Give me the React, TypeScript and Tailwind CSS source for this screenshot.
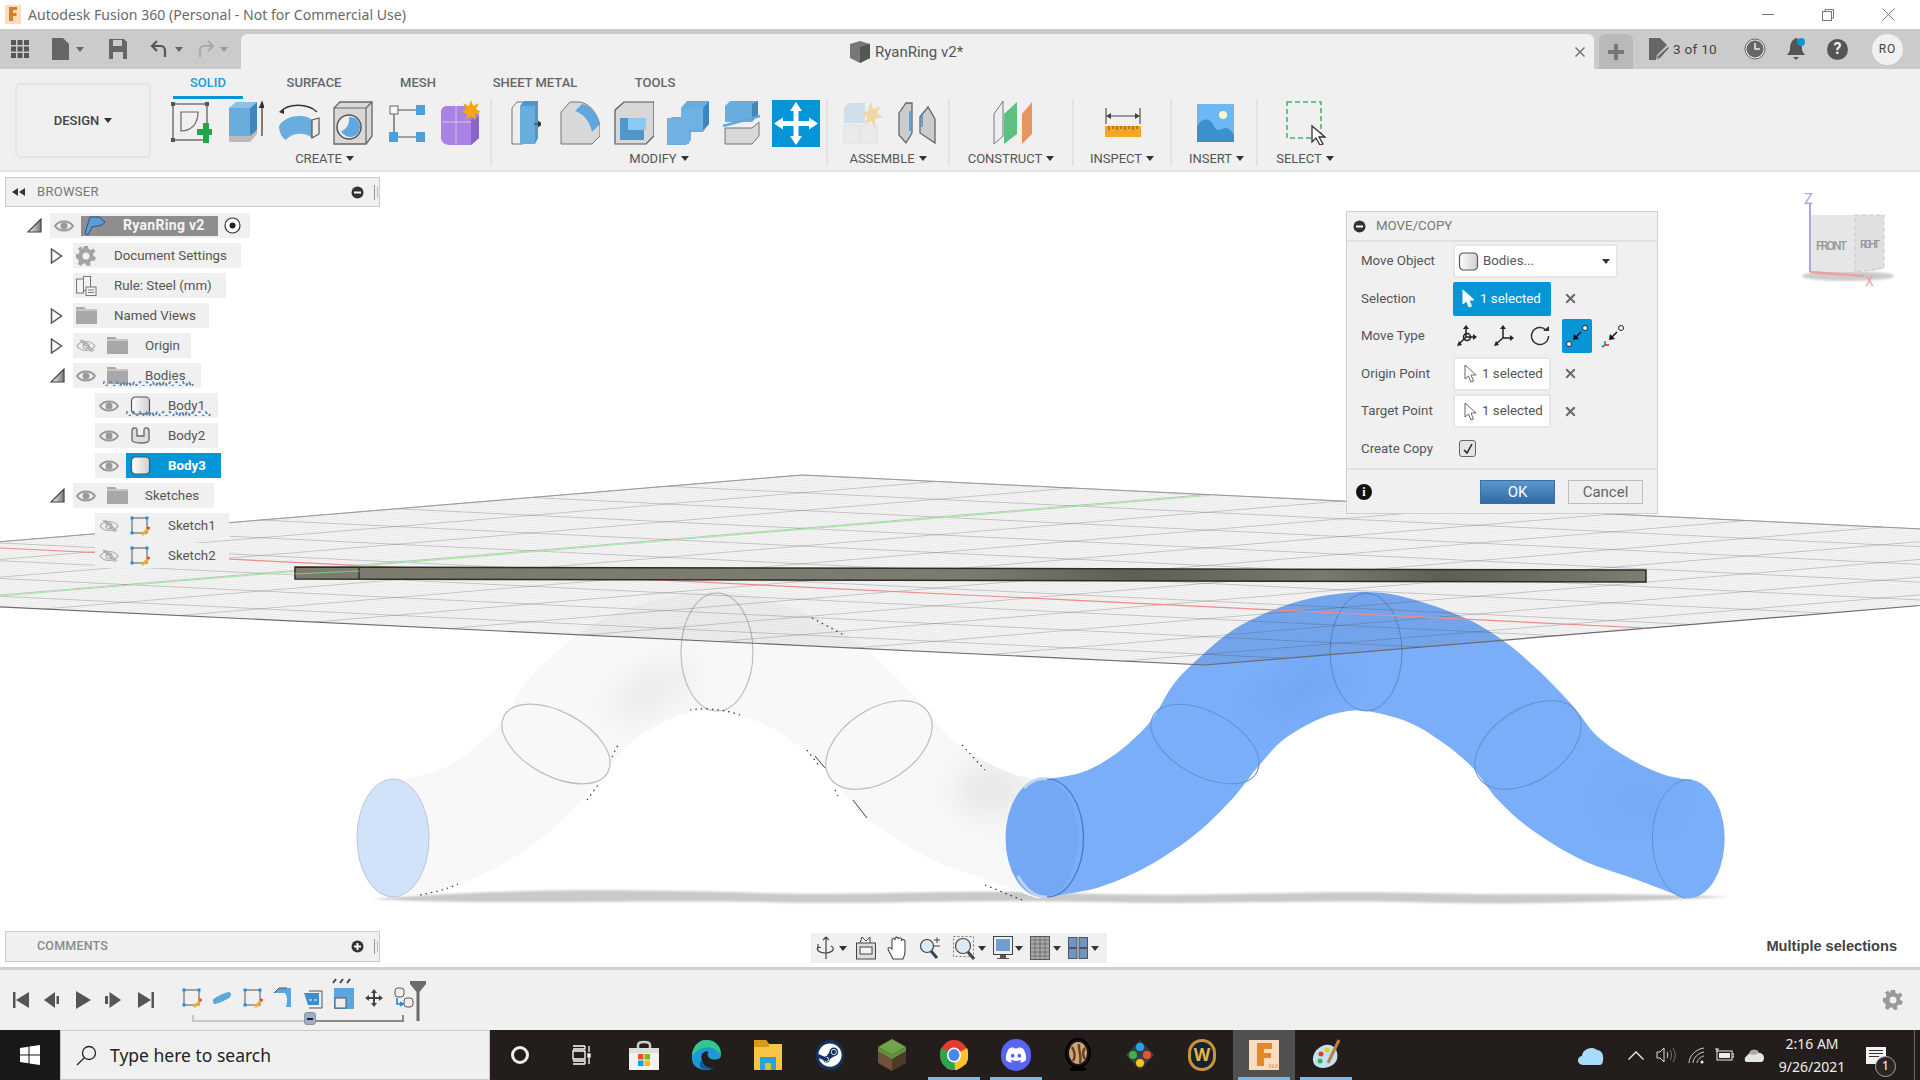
import { ReactNode } from 'react';
import { FaDiscord, FaSteam } from 'react-icons/fa';
import { X } from 'lucide-react';

type Pt = [number, number];

const upper: Pt[] = [[1047, 779], [1083, 772], [1117, 753], [1150, 722], [1173, 685], [1200, 657], [1233, 630], [1273, 610], [1317, 597], [1367, 592], [1408, 598], [1465, 618], [1505, 642], [1538, 670], [1572, 705], [1598, 737], [1632, 760], [1665, 775], [1692, 780]];
const lower: Pt[] = [[1685, 898], [1632, 878], [1582, 860], [1532, 830], [1498, 800], [1472, 767], [1442, 742], [1408, 722], [1367, 711], [1343, 712], [1317, 720], [1283, 740], [1257, 768], [1233, 798], [1197, 833], [1150, 865], [1100, 887], [1047, 897]];

// catmull-rom through the outline points
const curve = (p: Pt[]) => {
  let d = '';
  for (let i = 0; i < p.length - 1; i++) {
    const a = p[Math.max(i - 1, 0)];
    const b = p[i];
    const c = p[i + 1];
    const e = p[Math.min(i + 2, p.length - 1)];
    d += ` C${b[0] + (c[0] - a[0]) / 6} ${b[1] + (c[1] - a[1]) / 6} ${c[0] - (e[0] - b[0]) / 6} ${c[1] - (e[1] - b[1]) / 6} ${c[0]} ${c[1]}`;
  }
  return d;
};
const tubePath = `M1047 779${curve(upper)} A36 59 0 0 1 1685 898${curve(lower)} A36 59 0 0 1 1047 779 Z`;

const lerp = (a: Pt, b: Pt, t: number): Pt => [a[0] + (b[0] - a[0]) * t, a[1] + (b[1] - a[1]) * t];
const A: Pt = [802, 475];
const L: Pt = [-496, 583];
const R: Pt = [2503, 557];
const B: Pt = [1205, 665];

const Caret = ({ className = '' }: { className?: string }) => (
  <svg width="8" height="5" viewBox="0 0 8 5" className={className}>
    <path d="M0 0H8L4 5Z" fill="currentColor" />
  </svg>
);

const Arrow = ({ fill = '#fff', stroke = '#666' }: { fill?: string; stroke?: string }) => (
  <svg width="14" height="19" viewBox="0 0 14 19">
    <path d="M2 1V15L5.500 12L8 18L10.500 17L8 11H13Z" fill={fill} stroke={stroke} strokeWidth="1" strokeLinejoin="round" />
  </svg>
);

const Eye = ({ off = false }: { off?: boolean }) => (
  <svg width="20" height="14" viewBox="0 0 20 14">
    {off ? (
      <g fill="none" stroke="#aaa" strokeWidth="1.200">
        <path d="M1 7C5 1 15 1 19 7C15 13 5 13 1 7Z" />
        <circle cx="10" cy="7" r="3" />
        <path d="M4 1L16 13M6 1L18 12" />
      </g>
    ) : (
      <g>
        <path d="M1 7C5 1 15 1 19 7C15 13 5 13 1 7Z" fill="none" stroke="#999" strokeWidth="2" />
        <circle cx="10" cy="7" r="3.500" fill="#999" />
      </g>
    )}
  </svg>
);

const Folder = () => (
  <svg width="21" height="17" viewBox="0 0 21 17">
    <path d="M0 0H8L10 2H21V17H0Z" fill="#a8a8a8" />
    <path d="M0 3H21" stroke="#e4e4e4" strokeWidth="1" />
  </svg>
);

const Tri = ({ open }: { open: boolean }) =>
  open ? (
    <svg width="15" height="15" viewBox="0 0 15 15">
      <defs>
        <linearGradient id="tri" x1="0" y1="0" x2="1" y2="0">
          <stop offset="0" stopColor="#fff" />
          <stop offset="1" stopColor="#777" />
        </linearGradient>
      </defs>
      <path d="M1 14L14 1V14Z" fill="url(#tri)" stroke="#444" strokeWidth="1.200" />
    </svg>
  ) : (
    <svg width="13" height="16" viewBox="0 0 13 16">
      <path d="M1.500 1L11.500 8L1.500 15Z" fill="#fafafa" stroke="#555" strokeWidth="1.500" />
    </svg>
  );

const BodyIcon = ({ cut = false }: { cut?: boolean }) =>
  cut ? (
    <svg width="21" height="19" viewBox="0 0 21 19">
      <path d="M2 5C2 1 7 1 7 4V10H14V4C14 1 19 1 19 5V14C19 18 2 18 2 14Z" fill="#ddd" stroke="#666" strokeWidth="1.300" />
    </svg>
  ) : (
    <svg width="21" height="19" viewBox="0 0 21 19">
      <defs>
        <linearGradient id="cyl" x1="0" y1="0" x2="1" y2="0">
          <stop offset="0" stopColor="#fff" />
          <stop offset="1" stopColor="#cfcfcf" />
        </linearGradient>
      </defs>
      <rect x="1.500" y="1" width="18" height="17" rx="4" fill="url(#cyl)" stroke="#555" strokeWidth="1.200" />
    </svg>
  );

const SketchIcon = ({ size = 20 }: { size?: number }) => (
  <svg width={size} height={size} viewBox="0 0 20 20">
    <rect x="2" y="2" width="15" height="15" fill="none" stroke="#555" strokeWidth="1" />
    {[[2, 2], [17, 2], [2, 17]].map(([x, y]) => (
      <rect key={`${x}${y}`} x={x - 1.500} y={y - 1.500} width="3" height="3" fill="#1d8fe0" />
    ))}
    <path d="M11 18L17 12L19 14L13 20Z" fill="#f0b030" />
    <circle cx="18.500" cy="12" r="1.500" fill="#e8402a" />
  </svg>
);

const CircleSign = ({ plus = false }: { plus?: boolean }) => (
  <svg width="13" height="13" viewBox="0 0 13 13">
    <circle cx="6.500" cy="6.500" r="6" fill="#333" />
    <path d={plus ? 'M3 6.500H10M6.500 3V10' : 'M3 6.500H10'} stroke="#fff" strokeWidth="2" />
  </svg>
);

const Handle = () => (
  <svg width="4" height="15" viewBox="0 0 4 15">
    <path d="M.5 0V15" stroke="#999" />
    <path d="M3.500 2V13" stroke="#bbb" />
  </svg>
);

const toolIcons: Record<string, ReactNode> = {
  sketch: (
    <svg width="42" height="44" viewBox="0 0 42 44">
      <rect x="3" y="3" width="34" height="36" fill="none" stroke="#555" strokeWidth="1.200" />
      {[[3, 3], [37, 3], [3, 39]].map(([x, y]) => (
        <rect key={`${x}${y}`} x={x - 2} y={y - 2} width="4" height="4" fill="#555" />
      ))}
      <path d="M11 11H28C28 22 22 30 11 30Z" fill="none" stroke="#666" strokeWidth="1.200" />
      <path d="M27 28H33V22H39V28H42V34H39V42H33V34H27Z" fill="#1fa64a" />
    </svg>
  ),
  extrude: (
    <svg width="38" height="46" viewBox="0 0 38 46">
      <path d="M3 8L10 2H31V34L24 42H3Z" fill="#bbb" />
      <path d="M3 8H24V36H3Z" fill="#69addf" />
      <path d="M24 8L31 2V30L24 36Z" fill="#3f86bd" />
      <path d="M3 8L10 2H31L24 8Z" fill="#8cc2ea" />
      <path d="M36 36V4M33.500 8L36 2L38 8" stroke="#333" fill="#333" strokeWidth="1.200" />
    </svg>
  ),
  revolve: (
    <svg width="42" height="46" viewBox="0 0 42 46">
      <path d="M2 12C10 3 30 3 39 12" fill="none" stroke="#333" strokeWidth="1.300" />
      <path d="M1 12L6 9L6 14Z" fill="#333" />
      <path d="M1 26C8 14 28 14 34 20V38C28 32 14 32 8 40C4 38 1 32 1 26Z" fill="#69addf" />
      <path d="M34 20L41 18V34L34 38Z" fill="#eee" stroke="#555" strokeWidth="1.200" />
    </svg>
  ),
  hole: (
    <svg width="42" height="46" viewBox="0 0 42 46">
      <path d="M2 8L8 2H40V36L34 44H2Z" fill="#d8d8d8" stroke="#666" strokeWidth="1.300" />
      <path d="M34 44V8H2M34 8L40 2" fill="none" stroke="#666" strokeWidth="1.200" />
      <circle cx="17" cy="27" r="12" fill="#eee" stroke="#555" strokeWidth="1.500" />
      <path d="M17 17A10 10 0 1 1 9 31C14 30 18 24 17 17Z" fill="#5fa8df" />
    </svg>
  ),
  pattern: (
    <svg width="37" height="42" viewBox="0 0 37 42">
      <rect x="1" y="4" width="8" height="8" fill="#f8f8f8" stroke="#666" />
      <rect x="27" y="3" width="9" height="10" fill="#4d9fdc" />
      <rect x="0" y="30" width="9" height="10" fill="#4d9fdc" />
      <rect x="27" y="30" width="9" height="10" fill="#4d9fdc" />
      <path d="M9 8H27M5 12V30M9 35H27" stroke="#555" strokeWidth="1.200" />
    </svg>
  ),
  form: (
    <svg width="40" height="46" viewBox="0 0 40 46">
      <path d="M6 6H24L38 14V38L30 45H8C3 45 0 41 0 38V12C0 8 3 6 6 6Z" fill="#a983e4" />
      <path d="M30 20L38 16V38L30 45Z" fill="#8a63c8" />
      <path d="M1 22H30M15 6V45" stroke="#c9b0ef" strokeWidth="1.300" />
      <path d="M30 0L32 6L38 3L35 9L40 12L34 14L35 20L30 16L25 20L26 14L20 12L25 9L22 3L28 6Z" fill="#f5a50f" />
    </svg>
  ),
  press: (
    <svg width="30" height="46" viewBox="0 0 30 46">
      <path d="M1 8L6 2H12V44H1Z" fill="#eee" stroke="#777" />
      <path d="M9 6H24V44H9Z" fill="#69addf" />
      <path d="M9 6L13 1H27V38L24 44V6Z" fill="#4f96cc" />
      <path d="M23 24H30M27 21L31 24L27 27" stroke="#333" fill="#333" />
    </svg>
  ),
  fillet: (
    <svg width="40" height="46" viewBox="0 0 40 46">
      <path d="M1 12L10 2H20C30 4 38 14 40 26V36L32 44H1Z" fill="#d8d8d8" stroke="#777" />
      <path d="M22 4C31 6 37 14 40 24L32 32C30 22 24 14 15 11Z" fill="#5fa8df" />
    </svg>
  ),
  chamfer: (
    <svg width="40" height="46" viewBox="0 0 40 46">
      <path d="M1 10L10 2H40V36L32 44H1Z" fill="#d8d8d8" stroke="#555" strokeWidth="1.200" />
      <path d="M6 40V18H14V30H30V40Z" fill="#4f96cc" />
      <path d="M14 18H32V30H14Z" fill="#8cc8f2" />
    </svg>
  ),
  combine: (
    <svg width="42" height="46" viewBox="0 0 42 46">
      <path d="M14 8L20 1H42V24L36 32H24V40L19 45H0V22L5 17H14Z" fill="#69addf" />
      <path d="M14 8H36V30H22V44H0V18H14Z" fill="#6fb1e3" />
      <path d="M36 8L42 1V24L36 30Z" fill="#3f86bd" />
    </svg>
  ),
  split: (
    <svg width="40" height="46" viewBox="0 0 40 46">
      <path d="M3 6L8 1H36V16L30 22H3Z" fill="#69addf" />
      <path d="M30 4L36 1V16L30 20Z" fill="#3f86bd" />
      <path d="M1 26L38 16" stroke="#5fa8df" strokeWidth="2.500" />
      <path d="M3 28H30L37 22V36L30 44H3Z" fill="#d8d8d8" stroke="#777" />
    </svg>
  ),
  move: (
    <svg width="48" height="47" viewBox="0 0 48 47" className="bg-[#0696d7]">
      <path d="M24 2L30 11H26.500V21H37V17.500L46 23.500L37 29.500V26H26.500V36H30L24 45L18 36H21.500V26H11V29.500L2 23.500L11 17.500V21H21.500V11H18Z" fill="#fff" />
    </svg>
  ),
  newComp: (
    <svg width="40" height="44" viewBox="0 0 40 44" opacity=".45">
      <path d="M1 6L6 2H22V22H1Z" fill="#a8cde8" />
      <path d="M1 24H17V42H1ZM18 24H34V42H18Z" fill="#e4e4e4" stroke="#ccc" />
      <path d="M28 0L30 8L38 5L34 12L40 16L32 18L32 26L28 20L22 24L24 16L18 12L25 10Z" fill="#f2b94f" />
    </svg>
  ),
  joint: (
    <svg width="38" height="44" viewBox="0 0 38 44">
      <path d="M1 12L8 2H14V32L8 42L1 34Z" fill="#ccc" stroke="#666" strokeWidth="1.300" />
      <path d="M22 16L30 6L37 18V42L22 32Z" fill="#ccc" stroke="#666" strokeWidth="1.300" />
      <path d="M12 10V30M24 12V26" stroke="#3b98df" strokeWidth="1.500" />
    </svg>
  ),
  plane: (
    <svg width="40" height="46" viewBox="0 0 40 46">
      <path d="M1 14L10 1V36L1 44Z" fill="#eee" stroke="#777" />
      <path d="M11 14L24 2V34L11 44Z" fill="#5cc080" />
      <path d="M29 14L39 2V34L29 44Z" fill="#e49560" />
    </svg>
  ),
  measure: (
    <svg width="36" height="30" viewBox="0 0 36 30">
      <path d="M1 0V16M35 0V16M2 8H34" stroke="#444" strokeWidth="1.100" fill="none" />
      <path d="M1 8L6 5V11ZM35 8L30 5V11Z" fill="#444" />
      <rect x="0" y="18" width="36" height="11" fill="#f5a623" />
      <path d="M4 18V22M8 18V21M12 18V22M16 18V21M20 18V22M24 18V21M28 18V22M32 18V21" stroke="#77510f" />
    </svg>
  ),
  image: (
    <svg width="37" height="38" viewBox="0 0 37 38">
      <rect width="37" height="38" fill="#6cb8f5" />
      <circle cx="26" cy="11" r="4" fill="#fbf7c2" />
      <path d="M0 38V22C6 12 14 14 18 24C20 28 26 24 29 24C33 25 35 28 37 31V38Z" fill="#3b90cd" />
    </svg>
  ),
  select: (
    <svg width="40" height="44" viewBox="0 0 40 44">
      <rect x="1" y="1" width="34" height="36" fill="none" stroke="#3bb464" strokeWidth="1.500" strokeDasharray="5 3" />
      <path d="M26 25V41L30 37L34 44L37 43L33 36H39Z" fill="#fff" stroke="#333" strokeWidth="1.300" />
    </svg>
  ),
};

const Tool = ({ name }: { name: string }) => (
  <div className="w-[54px] h-[48px] flex items-center justify-center shrink-0">{toolIcons[name]}</div>
);

const Group = ({ label, width, tools, pad, labelClass = '', sep = true }: { label: string; width: string; tools: string[]; pad: string; labelClass?: string; sep?: boolean }) => (
  <div className={`flex flex-col ${width} ${sep ? 'border-r-2 border-[#e2e2e2]' : ''} h-[67px] shrink-0`}>
    <div className={`flex h-[48px] ${pad}`}>
      {tools.map(t => (
        <Tool key={t} name={t} />
      ))}
    </div>
    <div className={`flex items-center justify-center gap-[4px] h-[19px] pt-[4px] text-[13px] text-[#555] ${labelClass}`}>
      {label}
      <Caret className="text-[#333]" />
    </div>
  </div>
);

type RowProps = {
  level: 0 | 1 | 2;
  open?: boolean;
  eye?: 'on' | 'off';
  icon: ReactNode;
  text: string;
  pr: string;
  selected?: boolean;
  wavy?: boolean;
};

const Squiggle = ({ w, className }: { w: number; className: string }) => (
  <svg width={w} height="6" viewBox={`0 0 ${w} 6`} className={`absolute bottom-[2px] ${className}`}>
    <path
      d={`M0 4${Array.from({ length: Math.floor(w / 6) }, () => 'q1.500 -4 3 0 t3 0').join('')}`}
      fill="none"
      stroke="#5b7fae"
      strokeWidth="2"
      strokeDasharray="3 2.500"
    />
  </svg>
);

const Row = ({ level, open, eye, icon, text, pr, selected, wavy }: RowProps) => (
  <div className={`flex items-center h-[25px] ${level === 2 ? 'ml-[95px]' : 'ml-[50px]'}`}>
    {level === 1 && <div className="w-[23px] flex items-center">{open !== undefined && <Tri open={open} />}</div>}
    <div className={`relative flex items-center h-full bg-[#f0f0f0] ${level === 2 ? 'pl-[4px]' : 'pl-[3px]'} ${selected ? '' : pr}`}>
      {eye && (
        <div className="w-[20px] mr-[11px]">
          <Eye off={eye === 'off'} />
        </div>
      )}
      {wavy && <Squiggle w={level === 2 ? 87 : 95} className={level === 2 ? 'left-[31px]' : 'left-[30px]'} />}
      {selected ? (
        <div className={`flex items-center h-full -ml-[4px] pl-[4px] bg-[#0696d7] text-white font-bold ${pr}`}>
          <div className="w-[21px]">{icon}</div>
          <span className="ml-[17px] pt-px">{text}</span>
        </div>
      ) : (
        <>
          <div className="w-[21px]">{icon}</div>
          <span className="ml-[17px] pt-px text-[#555]">{text}</span>
        </>
      )}
    </div>
  </div>
);

const FormRow = ({ label, children }: { label: string; children: ReactNode }) => (
  <div className="flex items-center h-[34px]">
    <div className="w-[92px] text-[#555] shrink-0">{label}</div>
    {children}
  </div>
);

const Clear = () => <X size={15} strokeWidth={3} className="ml-[12px] text-[#666]" />;

const moveIcons = [
  <svg key="a" width="20" height="22" viewBox="0 0 20 22" fill="none" stroke="#222" strokeWidth="1.500">
    <path d="M9 2V12L2 19M9 12H18" /><path d="M9 0L6 4H12ZM20 12L16 9V15ZM0 21L5 20L2 16Z" fill="#222" stroke="none" /><circle cx="10" cy="12" r="3.500" />
  </svg>,
  <svg key="b" width="20" height="22" viewBox="0 0 20 22" fill="none" stroke="#222" strokeWidth="1.500">
    <path d="M9 2V13L2 19M9 13H18" /><path d="M9 0L6 4H12ZM20 13L16 10V16ZM0 21L5 20L2 16Z" fill="#222" stroke="none" />
  </svg>,
  <svg key="c" width="20" height="20" viewBox="0 0 20 20" fill="none" stroke="#333" strokeWidth="1.500">
    <path d="M16 4A8.500 8.500 0 1 0 18.500 10" /><path d="M13 5H19V0Z" fill="#333" stroke="none" />
  </svg>,
];

const PointToPoint = ({ color = '#111', axis = false }: { color?: string; axis?: boolean }) => (
  <svg width="24" height="24" viewBox="0 0 24 24" fill="none">
    <circle cx="20" cy="4" r="2.500" fill="#fff" stroke="#222" />
    {!axis && <circle cx="4" cy="20" r="2.500" fill="#fff" stroke="#222" />}
    <path d="M16 8L10 14" stroke={color} strokeWidth="1.500" />
    <path d="M8 16L9 10L14 15Z" fill={color} />
    {axis && (
      <g strokeWidth="1.800">
        <path d="M4 17V21" stroke="#33a853" />
        <path d="M4 21H8" stroke="#e33" />
        <path d="M4 21L1 23" stroke="#27c" />
      </g>
    )}
  </svg>
);

const Transport = ({ d, className = '' }: { d: string; className?: string }) => (
  <svg width="16" height="18" viewBox="0 0 16 18" className={className}>
    <path d={d} fill="#555" />
  </svg>
);

const timelineIcons: ReactNode[] = [
  <SketchIcon key="1" />,
  <svg key="2" width="20" height="14" viewBox="0 0 20 14"><path d="M1 9C1 7 14 1 17 1C19 1 20 5 17 7C14 9 5 13 3 13C1 13 1 11 1 9Z" fill="#5aa7e0" /></svg>,
  <SketchIcon key="3" />,
  <svg key="4" width="20" height="22" viewBox="0 0 20 22"><path d="M1 6L6 1H18V20H13C15 14 14 8 12 6Z" fill="#5aa7e0" /><path d="M1 6L6 1H14" fill="none" stroke="#555" /></svg>,
  <svg key="5" width="20" height="22" viewBox="0 0 20 22"><path d="M6 4H19V21H6" fill="#eee" stroke="#555" /><path d="M1 6H16V18H5Z" fill="#3c8fcf" /><path d="M6 13H9M11 13H14" stroke="#fff" /></svg>,
  <svg key="6" width="20" height="22" viewBox="0 0 20 22"><rect width="20" height="21" y="1" fill="#5aa7e0" /><rect x="1" y="11" width="11" height="10" fill="#eee" stroke="#555" /></svg>,
  <svg key="7" width="18" height="18" viewBox="0 0 18 18"><path d="M9 0L12 4H10V8H14V6L18 9L14 12V10H10V14H12L9 18L6 14H8V10H4V12L0 9L4 6V8H8V4H6Z" fill="#444" /></svg>,
  <svg key="8" width="20" height="22" viewBox="0 0 20 22"><rect x="1" y="1" width="9" height="9" rx="3" fill="#eee" stroke="#555" /><rect x="10" y="11" width="9" height="9" rx="3" fill="#eee" stroke="#555" /><path d="M3 11V17H8M6 15L9 17L6 19" fill="none" stroke="#1b7fd1" strokeWidth="1.500" /></svg>,
];

const NavIcon = ({ children, className }: { children: ReactNode; className: string }) => <div className={`flex items-center justify-center ${className}`}>{children}</div>;

const TaskIcon = ({ children, active, underline }: { children: ReactNode; active?: boolean; underline?: boolean }) => (
  <div className={`relative w-[62px] h-full flex items-center justify-center shrink-0 ${active ? 'bg-[#505050]' : ''}`}>
    {children}
    {underline && <div className="absolute bottom-0 left-[5px] right-[5px] h-[3px] bg-[#76b9ed]" />}
  </div>
);

const App = () => {
  const family1 = Array.from({ length: 97 }, (_, i) => i);
  const family2 = Array.from({ length: 127 }, (_, i) => i);

  return (
    <div className="flex flex-col w-[1920px] h-screen overflow-hidden bg-white font-[Roboto,sans-serif] text-[13.300px]">
      {/* title bar */}
      <div className="flex items-center h-[29px] shrink-0 pl-[5px] bg-white">
        <svg width="16" height="19" viewBox="0 0 16 19">
          <rect width="16" height="19" fill="#fbdcbf" />
          <path d="M4 2H12V5H8V8H11.500V11H8V16H4Z" fill="#d97f20" />
        </svg>
        <span className="ml-[7px] text-[14.100px] text-[#6a6a6a] font-['Noto_Sans',sans-serif]">Autodesk Fusion 360 (Personal - Not for Commercial Use)</span>
        <div className="ml-auto flex items-center pr-[25px] gap-[48px]">
          <div className="w-[12px] h-px bg-[#777]" />
          <svg width="12" height="12" viewBox="0 0 12 12" fill="none" stroke="#777">
            <path d="M3 2.500V.5H11.500V9H9.500" />
            <rect x=".5" y="2.500" width="9" height="9" />
          </svg>
          <svg width="13" height="13" viewBox="0 0 13 13" stroke="#777">
            <path d="M.5 .5L12.500 12.500M12.500 .5L.5 12.500" />
          </svg>
        </div>
      </div>

      {/* tab bar */}
      <div className="flex h-[40px] shrink-0 bg-[#cbcbcb]">
        <div className="flex items-center w-[241px] pl-[11px] shrink-0 text-[#666]">
          <svg width="18" height="18" viewBox="0 0 18 18" fill="#555">
            {[0, 6.500, 13].flatMap(x => [0, 6.500, 13].map(y => <rect key={`${x}-${y}`} x={x} y={y} width="5" height="5" />))}
          </svg>
          <svg width="17" height="22" viewBox="0 0 17 22" className="ml-[23px]" fill="#666">
            <path d="M0 0H11L17 6V22H0Z" />
          </svg>
          <Caret className="ml-[7px]" />
          <svg width="18" height="20" viewBox="0 0 18 20" className="ml-[25px]" fill="#666">
            <path d="M0 0H15L18 3V20H0ZM4 1V7H13V1ZM4 13V20H14V13Z" fillRule="evenodd" />
          </svg>
          <svg width="17" height="18" viewBox="0 0 17 18" className="ml-[23px]" fill="none" stroke="#555" strokeWidth="2.200">
            <path d="M3 6H11C14 6 15 9 15 11V17" />
            <path d="M7 1L2 6L7 11" />
          </svg>
          <Caret className="ml-[8px]" />
          <svg width="17" height="18" viewBox="0 0 17 18" className="ml-[15px]" fill="none" stroke="#aaa" strokeWidth="2.200">
            <path d="M14 6H6C3 6 2 9 2 11V17" />
            <path d="M10 1L15 6L10 11" />
          </svg>
          <Caret className="ml-[5px] text-[#999]" />
        </div>
        <div className="flex items-center w-[1353px] mt-[5px] pl-[609px] pr-[6px] bg-[#f0f0f0] rounded-t-[6px] shrink-0">
          <svg width="20" height="22" viewBox="0 0 20 22">
            <path d="M0 3L10 0L20 3V17L10 22L0 17Z" fill="#777" />
            <path d="M10 6L20 3V17L10 22Z" fill="#555" />
          </svg>
          <span className="ml-[5px] pt-[2px] text-[15px] text-[#555]">RyanRing v2*</span>
          <X size={16} strokeWidth={2.500} className="ml-auto text-[#777]" />
        </div>
        <div className="flex items-center justify-center w-[34px] mt-[5px] ml-[5px] bg-[#b9b9b9] rounded-t-[6px] shrink-0">
          <svg width="18" height="18" viewBox="0 0 18 18"><path d="M7 1H11V7H17V11H11V17H7V11H1V7H7Z" fill="#777" /></svg>
        </div>
        <div className="flex items-center pl-[16px]">
          <svg width="20" height="22" viewBox="0 0 20 22" fill="#666">
            <path d="M0 0H11L18 7L8 17L7 22H0Z" />
            <path d="M19 9L20 10L11 20L8 21L9 18Z" />
          </svg>
          <span className="ml-[4px] text-[13.500px] text-[#444] tracking-[.3px]">3 of 10</span>
          <svg width="22" height="22" viewBox="0 0 22 22" className="ml-[27px]">
            <circle cx="11" cy="11" r="10" fill="#eee" stroke="#666" />
            <circle cx="11" cy="11" r="8.500" fill="#666" />
            <path d="M11 5V11H16" stroke="#eee" strokeWidth="1.500" fill="none" />
          </svg>
          <svg width="22" height="24" viewBox="0 0 22 24" className="ml-[19px]">
            <path d="M11 1C7 3 5 6 5 12C5 15 3 16 2 18H20C19 16 17 15 17 12C17 6 15 3 11 1Z" fill="#555" />
            <path d="M8 20H14L11 23Z" fill="#555" />
            <circle cx="16" cy="5" r="4" fill="#0696d7" />
          </svg>
          <div className="ml-[20px] w-[21px] h-[21px] rounded-full bg-[#555] flex items-center justify-center text-[#eee] text-[16px] font-bold">?</div>
          <div className="ml-[24px] w-[31px] h-[31px] rounded-full bg-[#f0f0f0] flex items-center justify-center text-[12px] text-[#444] tracking-[.8px]">RO</div>
        </div>
      </div>

      {/* ribbon */}
      <div className="flex h-[103px] shrink-0 pl-[15px] bg-[#f0f0f0] border-b-2 border-[#e2e2e2]">
        <div className="flex items-center justify-center gap-[5px] w-[136px] h-[75px] mt-[14px] shrink-0 border-2 border-[#e4e4e4] rounded-[5px] font-medium text-[13px] text-[#444]">
          DESIGN
          <Caret className="text-[#333]" />
        </div>
        <div className="flex flex-col ml-[13px]">
          <div className="flex h-[30px] pl-[9px] text-[13px] font-medium text-[#666]">
            <div className="flex items-center justify-center w-[70px] border-b-[3px] border-[#0696d7] text-[#1a9ad6]">SOLID</div>
            <div className="flex items-center justify-center w-[70px] ml-[36px] pb-[3px]">SURFACE</div>
            <div className="flex items-center justify-center w-[70px] ml-[34px] pb-[3px]">MESH</div>
            <div className="flex items-center justify-center w-[90px] ml-[37px] pb-[3px]">SHEET METAL</div>
            <div className="flex items-center justify-center w-[70px] ml-[40px] pb-[3px]">TOOLS</div>
          </div>
          <div className="flex">
            <Group label="CREATE" width="w-[328px]" pad="pl-0" labelClass="pr-[5px]" tools={['sketch', 'extrude', 'revolve', 'hole', 'pattern', 'form']} />
            <Group label="MODIFY" width="w-[336px]" pad="pl-[7px]" tools={['press', 'fillet', 'chamfer', 'combine', 'split', 'move']} />
            <Group label="ASSEMBLE" width="w-[122px]" pad="pl-[8px]" tools={['newComp', 'joint']} />
            <Group label="CONSTRUCT" width="w-[124px]" pad="justify-center pl-[3px]" tools={['plane']} />
            <Group label="INSPECT" width="w-[98px]" pad="justify-center pl-[2px]" tools={['measure']} />
            <Group label="INSERT" width="w-[86px]" pad="justify-center pl-[2px]" labelClass="pl-[5px]" tools={['image']} />
            <Group label="SELECT" width="w-[92px]" pad="justify-center pl-[3px]" labelClass="pl-[2px]" tools={['select']} sep={false} />
          </div>
        </div>
      </div>

      {/* canvas */}
      <div className="relative flex-1 min-h-0 bg-white">
        <svg viewBox="0 172 1920 795" className="absolute inset-0 w-full h-full">
          <defs>
            <clipPath id="tubeClip">
              <path d={tubePath} />
            </clipPath>
            <filter id="soft" x="-50%" y="-50%" width="200%" height="200%">
              <feGaussianBlur stdDeviation="16" />
            </filter>
            <filter id="softer" x="-5%" y="-100%" width="110%" height="300%">
              <feGaussianBlur stdDeviation="1" />
            </filter>
            <linearGradient id="bar" x1="0" y1="0" x2="1" y2="0">
              <stop offset="0" stopColor="#7d7a6e" />
              <stop offset=".5" stopColor="#7d7a6e" />
              <stop offset=".62" stopColor="#5f5d54" />
              <stop offset=".76" stopColor="#7b786c" />
              <stop offset=".85" stopColor="#5f5d54" />
              <stop offset="1" stopColor="#7f7c70" />
            </linearGradient>
          </defs>

          {/* ground shadow */}
          <path d="M372 899C480 890 600 888 760 893C850 896 960 889 1060 893C1200 898 1300 890 1420 893C1540 896 1620 892 1730 897C1600 903 1500 905 1400 902C1300 900 1200 905 1100 902C960 899 860 905 760 902C620 900 480 905 372 899Z" fill="#c9c9c9" filter="url(#softer)" />

          {/* white copy */}
          <g transform="translate(-649 0)">
            <path d={tubePath} fill="#f8f8f8" />
            <g clipPath="url(#tubeClip)">
              <ellipse cx="1300" cy="690" rx="46" ry="18" fill="#e9e9e9" transform="rotate(-30 1300 690)" filter="url(#soft)" />
              <ellipse cx="1640" cy="790" rx="36" ry="26" fill="#e6e6e6" filter="url(#soft)" />
            </g>
            <ellipse cx="1366" cy="652" rx="36" ry="59" fill="none" stroke="#bdbdbd" strokeWidth="1.200" />
            <ellipse cx="1205" cy="744" rx="59" ry="32" fill="none" stroke="#bdbdbd" strokeWidth="1.200" transform="rotate(28.500 1205 744)" />
            <ellipse cx="1528" cy="745" rx="59" ry="36" fill="none" stroke="#bdbdbd" strokeWidth="1.200" transform="rotate(-33.500 1528 745)" />
            <ellipse cx="1042" cy="838" rx="36" ry="59" fill="#d2e2f9" stroke="#b6c6de" strokeWidth="1" />
          </g>
          <g fill="none" stroke="#333" strokeWidth="1.200" strokeDasharray="1.500 4">
            <path d="M420 895C435 892 445 890 458 884" />
            <path d="M587 800L598 785M612 757L618 745" />
            <path d="M690 710C700 708 720 708 740 715" />
            <path d="M807 750L820 767M835 790L838 796" />
            <path d="M962 745L985 770M985 885L1022 900" />
            <path d="M812 618L844 635" />
          </g>
          <path d="M853 800L867 818M815 756L825 768" stroke="#444" strokeWidth="1" />

          {/* blue selected body */}
          <path d={tubePath} fill="#7aaef9" />
          <g clipPath="url(#tubeClip)">
            <ellipse cx="1300" cy="690" rx="46" ry="18" fill="#5f93e2" opacity=".3" transform="rotate(-30 1300 690)" filter="url(#soft)" />
            <ellipse cx="1640" cy="800" rx="30" ry="20" fill="#5f93e2" opacity=".18" filter="url(#soft)" />
          </g>
          <ellipse cx="1042" cy="838" rx="36.500" ry="59" fill="#75a8f4" />
          <path d="M1047 779A36.500 59 0 0 1 1047 897" fill="none" stroke="#4a75b8" strokeWidth="1.200" />
          <path d="M1047 779A36.500 59 0 0 0 1024 788M1047 897A36.500 59 0 0 1 1018 876" fill="none" stroke="#bcd2ef" strokeWidth="3" />
          <ellipse cx="1366" cy="652" rx="36" ry="59" fill="none" stroke="#5d87c6" strokeWidth="1" />
          <ellipse cx="1205" cy="744" rx="59" ry="32" fill="none" stroke="#648fcf" strokeWidth="1" transform="rotate(28.500 1205 744)" />
          <ellipse cx="1528" cy="745" rx="59" ry="36" fill="none" stroke="#648fcf" strokeWidth="1" transform="rotate(-33.500 1528 745)" />
          <path d="M1692 780A36 59 0 0 0 1685 898" fill="none" stroke="#648fcf" strokeWidth="1" />

          {/* ground plane grid */}
          <path d={`M${A.join(' ')}L${L.join(' ')}L${B.join(' ')}L${R.join(' ')}Z`} fill="#000" fillOpacity=".015" />
          {family1.map(i => {
            const p = lerp(A, L, i / 96);
            const q = lerp(R, B, i / 96);
            const major = i % 10 === 0;
            return <line key={`a${i}`} x1={p[0]} y1={p[1]} x2={q[0]} y2={q[1]} stroke="#444" strokeOpacity={major ? 0.36 : 0.085} strokeWidth={major ? 0.8 : 0.6} />;
          })}
          {family2.map(i => {
            const p = lerp(A, R, i / 126);
            const q = lerp(L, B, i / 126);
            const major = i % 10 === 0;
            return <line key={`b${i}`} x1={p[0]} y1={p[1]} x2={q[0]} y2={q[1]} stroke="#444" strokeOpacity={major ? 0.36 : 0.085} strokeWidth={major ? 0.8 : 0.6} />;
          })}
          <path d={`M${L.join(' ')}L${B.join(' ')}L${R.join(' ')}`} fill="none" stroke="#6b6b6b" strokeWidth="1.200" />
          <path d={`M${L.join(' ')}L${A.join(' ')}L${R.join(' ')}`} fill="none" stroke="#999" strokeWidth="1" />
          <line x1="0" y1="548" x2="1646" y2="628" stroke="#f08a8a" strokeWidth="1.200" />
          <line x1="0" y1="596" x2="1214" y2="495" stroke="#a6e8a6" strokeWidth="1.200" />

          {/* thin body seen edge on */}
          <path d="M295 567L1646 570V582L295 579Z" fill="url(#bar)" stroke="#2c2c2a" strokeWidth="1.500" />
          <line x1="359" y1="567" x2="359" y2="579" stroke="#222" strokeWidth="1.200" />
          <path d="M295 574L359 571" stroke="#84c97f" strokeWidth="1" />

          {/* view cube */}
          <ellipse cx="1848" cy="276" rx="46" ry="5" fill="#ccc" filter="url(#softer)" />
          <path d="M1810 215L1884 215V268L1872 272H1810Z" fill="#e6e6e6" />
          <path d="M1855 215H1884V268L1855 272Z" fill="#e0e0e0" stroke="#c8c8c8" strokeDasharray="4 3" />
          <path d="M1810 203V272" stroke="#a9a4ef" strokeWidth="2" />
          <path d="M1810 272L1864 276" stroke="#eea0a0" strokeWidth="2.500" />
          <text x="1816" y="250" fontSize="12" fill="#999" fontFamily="Roboto" fontWeight="500" textLength="31">FRONT</text>
          <text x="1860" y="248" fontSize="11" fill="#999" fontFamily="Roboto" fontWeight="500" textLength="20">RIGHT</text>
          <text x="1804" y="204" fontSize="15" fill="#a9a4ef" fontFamily="Roboto">Z</text>
          <text x="1865" y="286" fontSize="14" fill="#eea0a0" fontFamily="Roboto">X</text>
        </svg>

        {/* browser panel */}
        <div className="absolute left-[5px] top-[5px] flex items-center w-[375px] h-[30px] pl-[6px] bg-[#f0f0f0] border border-[#ccc]">
          <svg width="13" height="8" viewBox="0 0 13 8" fill="#333">
            <path d="M6 0V8L0 4ZM13 0V8L7 4Z" />
          </svg>
          <span className="ml-[12px] text-[13px] tracking-[.3px] text-[#777]">BROWSER</span>
          <div className="ml-auto flex items-center gap-[10px] pr-[1px]">
            <CircleSign />
            <Handle />
          </div>
        </div>

        {/* tree */}
        <div className="absolute left-0 top-[41px] flex flex-col gap-[5px]">
          <div className="flex items-center h-[25px] ml-[27px]">
            <div className="w-[23px]">
              <Tri open />
            </div>
            <div className="flex items-center h-full w-[200px] bg-[#f0f0f0] pl-[4px]">
              <Eye />
              <div className="flex items-center h-[20px] w-[137px] ml-[7px] bg-[#8e8e8e] pl-[3px]">
                <svg width="22" height="20" viewBox="0 0 22 20">
                  <path d="M6 1H15L21 6C19 10 12 10 8 11L4 19L1 17Z" fill="#5d9bd5" stroke="#27507f" />
                </svg>
                <span className="ml-[17px] text-[14px] font-bold tracking-[.3px] text-[#f4f4f4]">RyanRing v2</span>
              </div>
              <svg width="17" height="17" viewBox="0 0 17 17" className="ml-[6px]">
                <circle cx="8.500" cy="8.500" r="7.500" fill="#fff" stroke="#333" strokeWidth="1.200" />
                <circle cx="8.500" cy="8.500" r="3" fill="#222" />
              </svg>
            </div>
          </div>
          <Row
            level={1}
            open={false}
            pr="pr-[14px]"
            text="Document Settings"
            icon={
              <svg width="20" height="20" viewBox="0 0 20 20">
                <path d="M8 0H12L12.600 3L15 4L17.500 2.500L19.500 5.500L17 7.500L17.300 10L20 11.500L18.500 15L15.500 14.500L14 16.500L14.500 19.500L11 20L9.500 17.500L7 17.500L5 20L2 18L3 15L1.500 13L0 12V8L3 7.500L3.500 5L2 2.500L5 .5L7 3Z" fill="#a3a3a3" />
                <circle cx="10" cy="10" r="3.500" fill="#f0f0f0" />
              </svg>
            }
          />
          <Row
            level={1}
            pr="pr-[14px]"
            text="Rule: Steel (mm)"
            icon={
              <svg width="21" height="20" viewBox="0 0 21 20" fill="#f4f4f4" stroke="#777">
                <rect x=".5" y="3" width="7" height="14" />
                <rect x="7.500" y=".5" width="7" height="14" />
                <rect x="10" y="11" width="10" height="8.500" />
                <path d="M12 14H18M12 16.500H18" />
              </svg>
            }
          />
          <Row level={1} open={false} pr="pr-[13px]" text="Named Views" icon={<Folder />} />
          <Row level={1} open={false} eye="off" pr="pr-[11px]" text="Origin" icon={<Folder />} />
          <Row level={1} open eye="on" pr="pr-[15px]" text="Bodies" icon={<Folder />} wavy />
          <Row level={2} eye="on" pr="pr-[13px]" text="Body1" icon={<BodyIcon />} wavy />
          <Row level={2} eye="on" pr="pr-[13px]" text="Body2" icon={<BodyIcon cut />} />
          <Row level={2} eye="on" pr="pr-[15px]" text="Body3" icon={<BodyIcon />} selected />
          <Row level={1} open eye="on" pr="pr-[15px]" text="Sketches" icon={<Folder />} />
          <Row level={2} eye="off" pr="pr-[13px]" text="Sketch1" icon={<SketchIcon />} />
          <Row level={2} eye="off" pr="pr-[13px]" text="Sketch2" icon={<SketchIcon />} />
        </div>

        {/* move/copy dialog */}
        <div className="absolute left-[1346px] top-[39px] flex flex-col w-[312px] h-[303px] bg-[#f0f0f0] border border-[#cfcfcf]">
          <div className="flex items-center h-[30px] pl-[6px] border-b-2 border-[#e0e0e0] shrink-0">
            <CircleSign />
            <span className="ml-[10px] text-[#777]">MOVE/COPY</span>
          </div>
          <div className="flex flex-col gap-[3.500px] pl-[14px] pt-[2px]">
            <FormRow label="Move Object">
              <div className="flex items-center w-[165px] h-[34px] pl-[3px] pr-[6px] bg-white border-2 border-[#e6e6e6] rounded-[3px]">
                <BodyIcon />
                <span className="ml-[4px] text-[#555]">Bodies...</span>
                <Caret className="ml-auto text-[#333]" />
              </div>
            </FormRow>
            <FormRow label="Selection">
              <div className="flex items-center w-[98px] h-[34px] pl-[8px] bg-[#0696d7] text-white rounded-[2px]">
                <Arrow fill="#fff" stroke="#fff" />
                <span className="ml-[5px]">1 selected</span>
              </div>
              <Clear />
            </FormRow>
            <FormRow label="Move Type">
              <div className="flex items-center h-full -ml-[4px]">
                {moveIcons.map((icon, i) => (
                  <div key={i} className="flex items-center justify-center w-[36.500px] h-full">
                    {icon}
                  </div>
                ))}
                <div className="flex items-center justify-center w-[30px] h-full mx-[3px] bg-[#0696d7] rounded-[2px]">
                  <PointToPoint />
                </div>
                <div className="flex items-center justify-center w-[36px] h-full">
                  <PointToPoint axis />
                </div>
              </div>
            </FormRow>
            <FormRow label="Origin Point">
              <div className="flex items-center w-[98px] h-[34px] pl-[8px] bg-white border-2 border-[#e6e6e6] rounded-[2px] text-[#555]">
                <Arrow />
                <span className="ml-[5px]">1 selected</span>
              </div>
              <Clear />
            </FormRow>
            <FormRow label="Target Point">
              <div className="flex items-center w-[98px] h-[34px] pl-[8px] bg-white border-2 border-[#e6e6e6] rounded-[2px] text-[#555]">
                <Arrow />
                <span className="ml-[5px]">1 selected</span>
              </div>
              <Clear />
            </FormRow>
            <FormRow label="Create Copy">
              <div className="flex items-center justify-center w-[17px] h-[17px] ml-[6px] bg-[#e4e4e4] border border-[#666] rounded-[3px]">
                <svg width="12" height="12" viewBox="0 0 12 12" fill="none" stroke="#222" strokeWidth="1.500">
                  <path d="M2 7L5 10L10 1" />
                </svg>
              </div>
            </FormRow>
          </div>
          <div className="flex items-center mt-auto h-[45px] pl-[9px] pr-[14px] pt-[1px] border-t-2 border-[#e0e0e0]">
            <div className="flex items-center justify-center w-[16px] h-[16px] rounded-full bg-[#111] text-white text-[12px] font-bold font-['Liberation_Serif',serif]">i</div>
            <div className="flex items-center justify-center w-[75px] h-[24px] ml-auto text-[15px] text-white bg-gradient-to-b from-[#5c96cc] to-[#2f6ba6] border border-[#3a6f9f]">OK</div>
            <div className="flex items-center justify-center w-[75px] h-[24px] ml-[13px] text-[15px] text-[#666] bg-[#eee] border border-[#bdbdbd]">Cancel</div>
          </div>
        </div>

        {/* comments panel */}
        <div className="absolute left-[5px] bottom-[5px] flex items-center w-[375px] h-[31px] pl-[31px] bg-[#f0f0f0] border border-[#ccc]">
          <span className="text-[12.500px] font-medium tracking-[.2px] text-[#8a8a8a]">COMMENTS</span>
          <div className="ml-auto flex items-center gap-[10px] pr-[1px]">
            <CircleSign plus />
            <Handle />
          </div>
        </div>

        {/* nav bar */}
        <div className="absolute left-[811px] bottom-[4px] flex items-center w-[296px] h-[30px] pl-[5px] bg-[#f0f0f0] text-[#333]">
          <NavIcon className="w-[20px]">
            <svg width="20" height="24" viewBox="0 0 20 24" fill="none" stroke="#444" strokeWidth="1.200">
              <path d="M10 1V23M7 4L10 1L13 4" />
              <path d="M15 10C19 12 18 16 10 17C3 17 0 14 2 11" />
              <path d="M2 8L2 12L5 11" />
            </svg>
          </NavIcon>
          <Caret className="ml-[3px] mr-[8px]" />
          <NavIcon className="w-[21px]">
            <svg width="20" height="24" viewBox="0 0 20 24" fill="none" stroke="#444">
              <rect x=".5" y="7" width="19" height="16" fill="#ddd" />
              <rect x="4" y="11" width="12" height="7" fill="#f3f3f3" />
              <path d="M4 7L6 1L10 5L14 1L14 7" />
            </svg>
          </NavIcon>
          <NavIcon className="w-[22px] ml-[11px]">
            <svg width="22" height="24" viewBox="0 0 22 24" fill="#fff" stroke="#444" strokeWidth="1.100">
              <path d="M6 23C4 19 1 14 1 13C1 11 3 11 5 13V4C5 2 7 2 8 4V3C8 .5 11 .5 11 3C12 1 15 1.500 14.500 4C15.500 3 18 3.500 18 5.500V15C18 19 17 21 16 23Z" />
            </svg>
          </NavIcon>
          <NavIcon className="w-[22px] ml-[10px]">
            <svg width="22" height="22" viewBox="0 0 22 22" fill="none">
              <circle cx="8" cy="9" r="6.500" fill="#dceaf5" stroke="#444" strokeWidth="1.200" />
              <path d="M12 14L18 21" stroke="#444" strokeWidth="3" />
              <path d="M15 3H21M18 .5V6M15 9H21" stroke="#444" />
            </svg>
          </NavIcon>
          <NavIcon className="w-[22px] ml-[12px]">
            <svg width="22" height="24" viewBox="0 0 22 24" fill="none">
              <rect x=".5" y=".5" width="20" height="20" stroke="#777" strokeDasharray="2 2" />
              <circle cx="10" cy="10" r="7.500" fill="#dceaf5" stroke="#444" strokeWidth="1.200" />
              <path d="M15 16L21 23" stroke="#444" strokeWidth="3" />
            </svg>
          </NavIcon>
          <Caret className="ml-[3px]" />
          <NavIcon className="w-[20px] ml-[7px]">
            <svg width="20" height="24" viewBox="0 0 20 24">
              <rect x=".5" y=".5" width="19" height="18" fill="#eee" stroke="#444" />
              <rect x="3" y="3" width="14" height="12" fill="#6f9fce" />
              <path d="M7 19H13V22H16V23H4V22H7Z" fill="#555" />
            </svg>
          </NavIcon>
          <Caret className="ml-[2px]" />
          <NavIcon className="w-[20px] ml-[7px]">
            <svg width="20" height="24" viewBox="0 0 20 24">
              <rect x=".5" y=".5" width="19" height="23" fill="#aaa" stroke="#555" />
              <path d="M5 0V24M10 0V24M15 0V24M0 4H20M0 8H20M0 12H20M0 16H20M0 20H20" stroke="#666" strokeWidth=".8" />
            </svg>
          </NavIcon>
          <Caret className="ml-[3px]" />
          <NavIcon className="w-[20px] ml-[7px]">
            <svg width="20" height="22" viewBox="0 0 20 22" fill="#6f94c6" stroke="#555">
              <rect x=".5" y=".5" width="8.500" height="10" />
              <rect x="11" y=".5" width="8.500" height="10" />
              <rect x=".5" y="11.500" width="8.500" height="10" />
              <rect x="11" y="11.500" width="8.500" height="10" />
            </svg>
          </NavIcon>
          <Caret className="ml-[3px]" />
        </div>

        <div className="absolute right-[23px] bottom-[9px] text-[14.600px] font-bold text-[#444] font-['Liberation_Sans',sans-serif]">Multiple selections</div>
      </div>

      {/* timeline */}
      <div className="flex items-center h-[63px] shrink-0 pl-[13px] pr-[17px] pb-[1px] bg-[#f0f0f0] border-t-[3px] border-[#cfcfcf]">
        <Transport d="M0 1H2.500V17H0ZM16 1V17L3 9Z" />
        <Transport d="M0 9L11 1V17ZM12.500 5H15V13H12.500Z" className="ml-[15px]" />
        <Transport d="M1 0L16 9L1 18Z" className="ml-[15px]" />
        <Transport d="M0 5H3V13H0ZM4.500 1L16 9L4.500 17Z" className="ml-[14px]" />
        <Transport d="M0 1L13 9L0 17ZM13.500 1H16V17H13.500Z" className="ml-[17px]" />
        <div className="relative flex items-center ml-[23px] h-full">
          {timelineIcons.map((icon, i) => (
            <div key={i} className="flex items-center justify-center w-[30.300px] h-[30px] -mt-[3px]">
              {icon}
            </div>
          ))}
          {/* scrubber */}
          <div className="absolute left-[15px] top-[45px] flex w-[212px] h-[7px]">
            <div className="w-[117px] h-full border-x-2 border-b-2 border-[#c8c8c8]" />
            <div className="flex-1 h-full border-r-2 border-b-2 border-[#8a8a8a]" />
          </div>
          <div className="absolute left-[127px] top-[42px] flex items-center justify-center w-[12px] h-[13px] bg-[#9eaec4] border border-[#8394ad] rounded-[3px]">
            <div className="w-[6px] h-[2px] bg-[#222]" />
          </div>
          <svg width="20" height="6" viewBox="0 0 20 6" className="absolute left-[155px] top-[8px]" stroke="#444" strokeWidth="2">
            <path d="M1 5L4 1M8 5L11 1M15 5L18 1" />
          </svg>
          {/* end of history marker */}
          <svg width="16" height="41" viewBox="0 0 16 41" className="absolute left-[233px] top-[11px]">
            <path d="M0 0H16V3L9.500 11V40H6.500V11L0 3Z" fill="#6b6b6b" />
          </svg>
        </div>
        <svg width="20" height="20" viewBox="0 0 20 20" className="ml-auto">
          <path d="M8 0H12L12.600 3L15 4L17.500 2.500L19.500 5.500L17 7.500L17.300 10L20 11.500L18.500 15L15.500 14.500L14 16.500L14.500 19.500L11 20L9.500 17.500L7 17.500L5 20L2 18L3 15L1.500 13L0 12V8L3 7.500L3.500 5L2 2.500L5 .5L7 3Z" fill="#999" />
          <circle cx="10" cy="10" r="3.500" fill="#f0f0f0" />
        </svg>
      </div>

      {/* windows taskbar */}
      <div className="flex items-center h-[50px] shrink-0 bg-[#231e1c] font-['Noto_Sans',sans-serif] text-[#eee]">
        <div className="flex items-center justify-center w-[60px] h-full bg-[#1a1918] shrink-0">
          <svg width="20" height="20" viewBox="0 0 20 20" fill="#fff">
            <path d="M0 3L8.500 1.700V9.500H0ZM9.500 1.500L20 0V9.500H9.500ZM0 10.500H8.500V18.300L0 17ZM9.500 10.500H20V20L9.500 18.500Z" />
          </svg>
        </div>
        <div className="flex items-center w-[430px] h-full pl-[15px] bg-[#f0f0f0] border border-[#c8c8c8] text-[17.500px] text-[#222] shrink-0">
          <svg width="21" height="21" viewBox="0 0 21 21" fill="none" stroke="#222" strokeWidth="1.300">
            <circle cx="13" cy="8" r="6.500" />
            <path d="M8.500 12.500L1 20" />
          </svg>
          <span className="ml-[13px]">Type here to search</span>
        </div>
        <div className="flex items-center h-full ml-[-1px]">
          <TaskIcon>
            <div className="w-[18px] h-[18px] rounded-full border-[3px] border-[#eee]" />
          </TaskIcon>
          <TaskIcon>
            <svg width="20" height="20" viewBox="0 0 20 20" fill="none" stroke="#fff" strokeWidth="1.300">
              <path d="M1 1H13M1 19H13M13 1V4M1 4H13M1 6H13V14H1ZM1 16H13V19M17 1V7M17 13V19" />
              <rect x="16" y="9" width="2" height="3" fill="#fff" />
            </svg>
          </TaskIcon>
          <TaskIcon>
            <svg width="30" height="30" viewBox="0 0 30 30">
              <path d="M9 10V5C9 1 21 1 21 5V10" fill="none" stroke="#ccc" strokeWidth="2.500" />
              <rect y="8" width="30" height="22" fill="#f2f2f2" />
              <rect y="8" width="30" height="5" fill="#ddd" />
              <rect x="9" y="14" width="5.500" height="5.500" fill="#f25022" />
              <rect x="15.500" y="14" width="5.500" height="5.500" fill="#7fba00" />
              <rect x="9" y="20.500" width="5.500" height="5.500" fill="#00a4ef" />
              <rect x="15.500" y="20.500" width="5.500" height="5.500" fill="#ffb900" />
            </svg>
          </TaskIcon>
          <TaskIcon>
            <svg width="30" height="30" viewBox="0 0 30 30">
              <path d="M15 0C24 0 30 6 30 15C30 20 24 20 20 19C17 18 15 14 18 12C12 10 9 15 11 21C12 26 18 29 23 28C15 32 3 30 1 20C0 9 6 0 15 0Z" fill="#1d9ad6" />
              <path d="M15 0C24 0 30 6 30 15C26 8 18 6 12 8C8 9 4 12 1 16C1 8 7 0 15 0Z" fill="#34c98a" />
              <path d="M11 21C13 27 18 29 23 28C17 31 12 30 9 27C8 24 9 21 11 21Z" fill="#0c5a9e" />
            </svg>
          </TaskIcon>
          <TaskIcon>
            <svg width="28" height="30" viewBox="0 0 28 30">
              <path d="M0 0H12L15 4H28V30H0Z" fill="#f6c543" />
              <path d="M0 0H12L15 4V7H0Z" fill="#d99a1c" />
              <path d="M6 17H22V30H17V23H11V30H6Z" fill="#2b9fe0" />
              <rect x="11" y="23" width="6" height="7" fill="#e9b92c" />
            </svg>
          </TaskIcon>
          <TaskIcon>
            <div className="flex items-center justify-center w-[28px] h-[30px] rounded-full bg-[#13345f]">
              <FaSteam size={24} color="#ffffff" />
            </div>
          </TaskIcon>
          <TaskIcon>
            <svg width="28" height="32" viewBox="0 0 28 32">
              <path d="M14 0L28 8L14 16L0 8Z" fill="#6fa44b" />
              <path d="M0 8L14 16V32L0 24Z" fill="#6e5138" />
              <path d="M28 8L14 16V32L28 24Z" fill="#4f3a28" />
              <path d="M0 8L14 16L28 8V12L14 20L0 12Z" fill="#5f9140" />
            </svg>
          </TaskIcon>
          <TaskIcon underline>
            <svg width="28" height="30" viewBox="0 0 28 30">
              <ellipse cx="14" cy="15" rx="14" ry="15" fill="#e53c30" />
              <path d="M14 15L27 8C29 12 29 19 26 24L17 30C14 30 8 29 7 29Z" fill="#fbc22e" />
              <path d="M14 15L1 8C-1 14 0 24 7 28C10 30 13 30 15 30Z" fill="#2da44e" />
              <ellipse cx="14" cy="15" rx="7" ry="7.500" fill="#fff" />
              <ellipse cx="14" cy="15" rx="5.500" ry="6" fill="#4a86e8" />
            </svg>
          </TaskIcon>
          <TaskIcon underline>
            <div className="flex items-center justify-center w-[30px] h-[32px] rounded-full bg-[#5865f2]">
              <FaDiscord size={22} color="#fff" />
            </div>
          </TaskIcon>
          <TaskIcon>
            <svg width="26" height="34" viewBox="0 0 26 34">
              <ellipse cx="13" cy="15" rx="12" ry="14" fill="#1c1412" stroke="#000" strokeWidth="2" />
              <ellipse cx="13" cy="15" rx="9" ry="11" fill="#caa67c" />
              <path d="M7 9C10 14 11 18 8 23M14 6C13 12 17 18 15 25M20 10C17 13 18 19 20 21" stroke="#6b3f20" strokeWidth="2.500" fill="none" />
              <ellipse cx="13" cy="31" rx="9" ry="2" fill="#000" />
            </svg>
          </TaskIcon>
          <TaskIcon>
            <svg width="30" height="32" viewBox="0 0 30 32">
              <path d="M15 1L29 16L15 31L1 16Z" fill="#3a4048" />
              <circle cx="15" cy="8" r="4" fill="#29a3e8" />
              <circle cx="8" cy="16" r="4" fill="#3bb54a" />
              <circle cx="22" cy="16" r="4" fill="#e8552a" />
              <circle cx="15" cy="24" r="4" fill="#f5c518" />
            </svg>
          </TaskIcon>
          <TaskIcon>
            <div className="flex items-center justify-center w-[28px] h-[32px] rounded-full bg-[#14213d] border-[3px] border-[#c9952e] text-[#e8b63c] font-bold text-[17px]">W</div>
          </TaskIcon>
          <TaskIcon active underline>
            <svg width="30" height="30" viewBox="0 0 30 30">
              <rect width="30" height="30" fill="#fbdcbf" />
              <path d="M8 3H23V9H15V13H22V18H15V26H8Z" fill="#e08a2c" />
              <text x="19" y="28" fontSize="6" fill="#d9935a" fontFamily="Roboto">360</text>
            </svg>
          </TaskIcon>
          <TaskIcon underline>
            <svg width="30" height="32" viewBox="0 0 30 32">
              <path d="M14 6C23 4 28 12 26 20C24 28 10 32 4 26C0 22 1 10 14 6Z" fill="#bfe1f5" />
              <circle cx="10" cy="15" r="2.500" fill="#e33" />
              <circle cx="16" cy="11" r="2.500" fill="#f5c518" />
              <circle cx="9" cy="22" r="2.500" fill="#3bb54a" />
              <path d="M17 24L28 1" stroke="#c08040" strokeWidth="3" />
            </svg>
          </TaskIcon>
        </div>
        <div className="ml-auto flex items-center h-full">
          <svg width="27" height="19" viewBox="0 0 27 19" className="mr-[24px]">
            <path d="M6 19C0 19 -1 11 5 10C5 4 14 -1 20 4C25 4 27 10 26 14C26 17 25 19 22 19Z" fill="#a8dcf8" />
          </svg>
          <svg width="16" height="9" viewBox="0 0 16 9" fill="none" stroke="#eee" strokeWidth="1.300" className="mr-[12px]">
            <path d="M.5 8.500L8 1L15.500 8.500" />
          </svg>
          <svg width="20" height="18" viewBox="0 0 20 18" fill="none" stroke="#ddd" className="mr-[12px]">
            <path d="M1 6H4L8 2V16L4 12H1Z" />
            <path d="M11 6C12 8 12 10 11 12" />
            <path d="M14 4C16 7 16 11 14 14M17 2C20 7 20 11 17 16" stroke="#777" />
          </svg>
          <svg width="17" height="17" viewBox="0 0 17 17" fill="none" stroke="#ccc" className="mr-[9px]">
            <path d="M1 16C1 9 8 2 16 1M5 16C5 11 10 6 16 5M9 16C9 13 12 10 16 9" />
            <circle cx="14" cy="15" r="1.500" fill="#eee" stroke="none" />
          </svg>
          <svg width="20" height="14" viewBox="0 0 20 14" fill="none" stroke="#eee" className="mr-[10px]">
            <rect x="3" y="3" width="15" height="9" />
            <rect x="5" y="5" width="11" height="5" fill="#eee" stroke="none" />
            <path d="M18 6H20V9H18M3 4V1M1 1H5" />
          </svg>
          <svg width="20" height="13" viewBox="0 0 20 13" className="mr-[14px]">
            <path d="M5 5C6 0 13 -1 15 4C18 4 20 6 20 9C20 11 19 13 17 13H3C0 13 0 8 3 7C3 6 4 5 5 5Z" fill="#e6e6e6" />
            <path d="M5 5C6 0 13 -1 15 4L10 6Z" fill="#aaa" />
          </svg>
          <div className="flex flex-col items-center justify-center w-[68px] h-full text-[14px] leading-[23px] text-[#eee]">
            <span>2:16 AM</span>
            <span>9/26/2021</span>
          </div>
          <div className="relative ml-[20px] mr-[28px] w-[20px] h-[17px] bg-[#f2f2f2]">
            <div className="mt-[3px] mx-[3px] h-px bg-[#333]" />
            <div className="mt-[2px] mx-[3px] h-px bg-[#333]" />
            <div className="mt-[2px] mx-[3px] w-[10px] h-px bg-[#333]" />
            <div className="absolute left-[9px] top-[9px] flex items-center justify-center w-[21px] h-[21px] rounded-full bg-[#2a2624] border border-[#aaa] text-[13px] text-white">1</div>
          </div>
          <div className="w-px h-full bg-[#6a6a6a] mr-[5px]" />
        </div>
      </div>
    </div>
  );
};

export default App;
